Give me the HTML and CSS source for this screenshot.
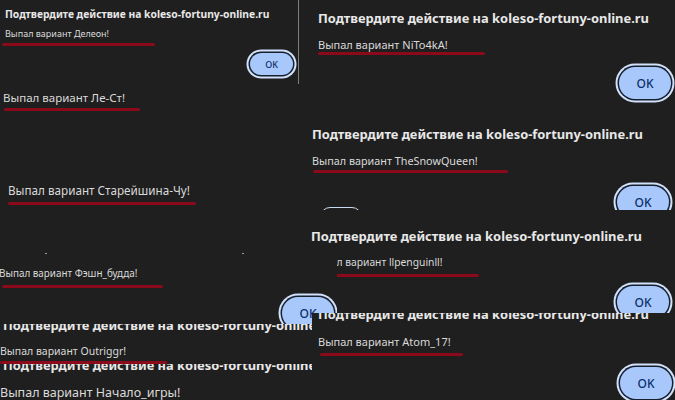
FILE: index.html
```html
<!DOCTYPE html>
<html lang="ru">
<head>
  <meta charset="utf-8">
  <title>Выпал вариант</title>
  <link rel="stylesheet" href="styles.css">
</head>
<body>
  <div class="desk">

    <div class="shot shot-deleon">
      <h2 class="title">Подтвердите действие на koleso-fortuny-online.ru</h2>
      <p class="msg">Выпал вариант Делеон!</p>
      <div class="mark"></div>
      <div class="actions"><button class="ok">OK</button></div>
    </div>

    <div class="shot shot-nito">
      <h2 class="title">Подтвердите действие на koleso-fortuny-online.ru</h2>
      <p class="msg">Выпал вариант NiTo4kA!</p>
      <div class="mark"></div>
      <div class="actions"><button class="ok">OK</button></div>
    </div>

    <div class="shot shot-lest">
      <p class="msg">Выпал вариант Ле-Ст!</p>
      <div class="mark"></div>
    </div>

    <div class="shot shot-elder">
      <p class="msg">Выпал вариант Старейшина-Чу!</p>
      <div class="mark"></div>
    </div>

    <div class="shot shot-snow">
      <h2 class="title">Подтвердите действие на koleso-fortuny-online.ru</h2>
      <p class="msg">Выпал вариант TheSnowQueen!</p>
      <div class="mark"></div>
      <div class="actions"><button class="ok">OK</button></div>
      <span class="ghost-btn"></span>
    </div>

    <div class="shot shot-penguin">
      <h2 class="title">Подтвердите действие на koleso-fortuny-online.ru</h2>
      <p class="msg">Выпал вариант llpenguinll!</p>
      <div class="mark"></div>
      <div class="actions"><button class="ok">OK</button></div>
    </div>

    <div class="shot shot-fashion">
      <div class="specks"><span></span><span></span></div>
      <p class="msg">Выпал вариант Фэшн_будда!</p>
      <div class="mark"></div>
      <div class="actions"><button class="ok">OK</button></div>
    </div>

    <div class="shot shot-outriggr">
      <h2 class="title">Подтвердите действие на koleso-fortuny-online.ru</h2>
      <p class="msg">Выпал вариант Outriggr!</p>
      <div class="mark"></div>
    </div>

    <div class="shot shot-start">
      <h2 class="title">Подтвердите действие на koleso-fortuny-online.ru</h2>
      <p class="msg">Выпал вариант Начало_игры!</p>
    </div>

    <div class="shot shot-atom">
      <h2 class="title">Подтвердите действие на koleso-fortuny-online.ru</h2>
      <p class="msg">Выпал вариант Atom_17!</p>
      <div class="mark"></div>
      <div class="actions"><button class="ok">OK</button></div>
    </div>

  </div>
</body>
</html>
```

FILE: styles.css
```css
html, body {
  margin: 0;
  padding: 0;
  background: #1f1f1f;
}

body {
  font-family: "Noto Sans", "Open Sans", sans-serif;
}

.desk {
  position: relative;
  width: 675px;
  height: 400px;
  overflow: hidden;
  background: #1f1f1f;
}

/* each piece of a dialog screenshot sits on the canvas */
.shot {
  position: absolute;
  overflow: hidden;
  box-sizing: border-box;
  background: #1f1f1f;
}

.title {
  margin: 0;
  font-size: 12.9px;
  line-height: 16px;
  font-weight: 700;
  color: #e8e8e8;
  white-space: nowrap;
}

.msg {
  margin: 0;
  font-size: 11.5px;
  line-height: 14px;
  color: #dadada;
  white-space: nowrap;
}

.mark {
  height: 3px;
  border-radius: 2px;
  background: #8a0a1c;
}

.actions {
  display: flex;
  justify-content: flex-end;
}

.ok {
  width: 52px;
  height: 32px;
  padding: 0;
  border: none;
  border-radius: 16px;
  background: #a8c7fa;
  color: #0b2f6b;
  font-family: inherit;
  font-size: 12px;
  font-weight: 500;
  box-shadow: 0 0 0 1.5px #16202f, 0 0 0 3.5px #d3e2fb;
}

.ghost-btn {
  position: absolute;
  left: 20px;
  top: 100px;
  width: 42px;
  height: 20px;
  box-sizing: border-box;
  border: 1.5px solid #c9d9f2;
  border-radius: 10px;
}

.specks {
  display: flex;
  height: 1px;
  margin-top: 3px;
  padding-left: 45px;
  gap: 195px;
}

.specks span {
  width: 2px;
  height: 1px;
  background: #9a9a9a;
}

/* Делеон */
.shot-deleon {
  left: 0;
  top: 0;
  width: 299px;
  height: 84px;
  padding-left: 5px;
  border-right: 1px solid #7d7d7d;
}

.shot-deleon .title {
  margin-top: 7px;
  font-size: 10.3px;
  line-height: 14px;
}

.shot-deleon .msg {
  margin-top: 7px;
  font-size: 9px;
  line-height: 12px;
}

.shot-deleon .mark {
  width: 153px;
  margin: 3px 0 0 -3px;
}

.shot-deleon .actions {
  margin: 7px 5px 0 0;
}

.shot-deleon .ok {
  width: 43px;
  height: 22px;
  border-radius: 11px;
  font-size: 9px;
}

/* NiTo4kA */
.shot-nito {
  left: 300px;
  top: 0;
  width: 375px;
  height: 107px;
  padding-left: 18px;
}

.shot-nito .title { margin-top: 10px; }
.shot-nito .msg { margin-top: 12px; font-size: 11px; }

.shot-nito .mark {
  width: 167px;
}

.shot-nito .actions { margin: 12px 4px 0 0; }

/* Ле-Ст */
.shot-lest {
  left: 0;
  top: 84px;
  width: 299px;
  height: 40px;
  padding-left: 3px;
}

.shot-lest .msg { margin-top: 7px; }

.shot-lest .mark {
  width: 136px;
  margin: 3px 0 0 1px;
}

/* Старейшина-Чу */
.shot-elder {
  left: 0;
  top: 170px;
  width: 299px;
  height: 45px;
  padding-left: 8px;
}

.shot-elder .msg { margin-top: 13px; font-size: 11.7px; }

.shot-elder .mark {
  width: 188px;
  margin-top: 5px;
}

/* TheSnowQueen */
.shot-snow {
  left: 300px;
  top: 107px;
  width: 375px;
  height: 103px;
  padding-left: 12px;
}

.shot-snow .title { margin-top: 19px; }
.shot-snow .msg { margin-top: 12px; font-size: 10.8px; }

.shot-snow .mark {
  width: 195px;
  margin: 2px 0 0 1px;
}

.shot-snow .actions { margin: 13px 6px 0 0; }

/* llpenguinll */
.shot-penguin {
  left: 300px;
  top: 210px;
  width: 375px;
  height: 103px;
  padding-left: 11px;
}

.shot-penguin .title { margin-top: 18px; }

.shot-penguin .msg {
  margin: 11px 0 0 -1px;
  font-size: 10.3px;
}

.shot-penguin .mark {
  width: 167px;
  margin: 5px 0 0 1px;
}

.shot-penguin .actions { margin: 9px 6px 0 0; }

/* Фэшн_будда */
.shot-fashion {
  left: 0;
  top: 250px;
  width: 337px;
  height: 82px;
}

.shot-fashion .msg {
  margin: 12px 0 0 -1px;
  font-size: 9.9px;
}

.shot-fashion .mark {
  width: 161px;
  margin: 5px 0 0 2px;
}

.shot-fashion .actions { margin: 9px 3px 0 0; }

/* Outriggr */
.shot-outriggr {
  left: 0;
  top: 324px;
  width: 312px;
  height: 40px;
  padding-left: 3px;
}

.shot-outriggr .title { margin-top: -7px; }

.shot-outriggr .msg {
  margin: 11px 0 0 -3px;
  font-size: 10.5px;
}

.shot-outriggr .mark {
  width: 167px;
  margin: 3px 0 0 -3px;
}

/* Начало_игры */
.shot-start {
  left: 0;
  top: 364px;
  width: 316px;
  height: 36px;
  padding-left: 3px;
}

.shot-start .title { margin-top: -7px; }

.shot-start .msg {
  margin: 12px 0 0 -3px;
  font-size: 12.5px;
  line-height: 16px;
}

/* Atom_17 */
.shot-atom {
  left: 312px;
  top: 313px;
  width: 363px;
  height: 87px;
  padding-left: 6px;
}

.shot-atom .title { margin-top: -7px; }
.shot-atom .msg { margin-top: 13px; font-size: 11px; }

.shot-atom .mark {
  width: 143px;
  margin: 4px 0 0 2px;
}

.shot-atom .actions { margin: 11px 3px 0 0; }
```
